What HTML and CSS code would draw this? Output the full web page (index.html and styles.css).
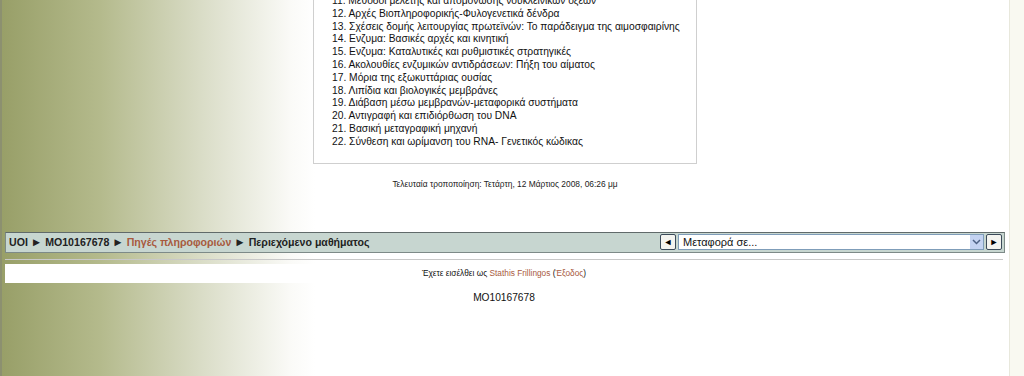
FILE: index.html
```html
<!DOCTYPE html>
<html lang="el">
<head>
  <meta charset="UTF-8">
  <title>MO10167678: Περιεχόμενο μαθήματος</title>
  <link rel="stylesheet" href="styles.css">
</head>
<body>
<div id="page">
  <div id="content">
    <div class="box">
      <ul class="topics">
        <li>11. Μέθοδοι μελέτης και απομόνωσης νουκλεϊνικών οξέων</li>
        <li>12. Αρχές Βιοπληροφορικής-Φυλογενετικά δένδρα</li>
        <li>13. Σχέσεις δομής λειτουργίας πρωτεϊνών: Το παράδειγμα της αιμοσφαιρίνης</li>
        <li>14. Ενζυμα: Βασικές αρχές και κινητική</li>
        <li>15. Ενζυμα: Καταλυτικές και ρυθμιστικές στρατηγικές</li>
        <li>16. Ακολουθίες ενζυμικών αντιδράσεων: Πήξη του αίματος</li>
        <li>17. Μόρια της εξωκυττάριας ουσίας</li>
        <li>18. Λιπίδια και βιολογικές μεμβράνες</li>
        <li>19. Διάβαση μέσω μεμβρανών-μεταφορικά συστήματα</li>
        <li>20. Αντιγραφή και επιδιόρθωση του DNA</li>
        <li>21. Βασική μεταγραφική μηχανή</li>
        <li>22. Σύνθεση και ωρίμανση του RNA- Γενετικός κώδικας</li>
      </ul>
    </div>
    <div class="modified">Τελευταία τροποποίηση: Τετάρτη, 12 Μάρτιος 2008, 06:26 μμ</div>
  </div>

  <div class="navbar">
    <div class="breadcrumb">
      <a href="#">UOI</a> <span class="sep">&#9658;</span>
      <a href="#">MO10167678</a> <span class="sep">&#9658;</span>
      <a href="#" class="link">Πηγές πληροφοριών</a> <span class="sep">&#9658;</span>
      Περιεχόμενο μαθήματος
    </div>
    <div class="jump">
      <span class="arrbtn">&#9668;</span>
      <div class="select">
        <span>Μεταφορά σε...</span>
        <i class="drop"><svg width="9" height="6" viewBox="0 0 9 6"><path d="M1 1 L4.5 4.5 L8 1" fill="none" stroke="#4d6185" stroke-width="1.5"/></svg></i>
      </div>
      <span class="arrbtn">&#9658;</span>
    </div>
  </div>

  <div class="footer">
    <div class="logininfo">Έχετε εισέλθει ως <a href="#">Stathis Frillingos</a> (<a href="#">Έξοδος</a>)</div>
    <div class="homelink">MO10167678</div>
  </div>
</div>
</body>
</html>
```

FILE: styles.css
```css
* {
  padding: 0;
  margin: 0;
  list-style: none;
}

html, body {
  height: 100%;
}

body {
  font-family: "Liberation Sans", Arial, sans-serif;
  color: #111;
  background:
    linear-gradient(to right, #8c9070 0, #8c9070 2px, transparent 2px),
    linear-gradient(to left, #f9f9f1 0, #f9f9f1 14px, #e8e8dc 14px, #e8e8dc 15px, transparent 15px),
    linear-gradient(to right, #989f68 2px, #b4ba8c 100px, #d9dcc6 200px, #fafaf7 290px, #fff 315px) no-repeat;
  background-color: #fff;
  overflow: hidden;
}

a {
  text-decoration: none;
  color: #111;
}

#page {
  width: 1000px;
  margin-left: 5px;
}

#content {
  margin-top: -5px;
}

.box {
  width: 364px;
  margin: 0 auto;
  border: 1px solid #cfcfcf;
  border-top: none;
  padding: 0 0 14px 18px;
  box-sizing: content-box;
}

.topics li {
  font-size: 10.25px;
  line-height: 12.8px;
  white-space: nowrap;
}

.modified {
  text-align: center;
  font-size: 8.4px;
  margin-top: 15px;
  color: #222;
}

.navbar {
  display: flex;
  justify-content: space-between;
  align-items: center;
  height: 19px;
  margin-top: 43px;
  border: 1px solid #7d8a88;
  border-top-color: #606a6a;
  background-color: #c7d6d0;
  padding: 0 0 0 3px;
}

.breadcrumb {
  font-size: 10.6px;
  font-weight: bold;
  white-space: nowrap;
  color: #222;
}

.breadcrumb a {
  color: #222;
}

.breadcrumb .sep {
  font-size: 11.5px;
  line-height: 10px;
}

.breadcrumb .link {
  color: #a85a3e;
}

.jump {
  display: flex;
  align-items: center;
  gap: 2px;
  padding-right: 2px;
}

.arrbtn {
  display: inline-block;
  width: 14px;
  height: 14px;
  border: 1px solid #3b4a5a;
  border-radius: 2px;
  background-color: #f4f4f0;
  font-size: 9px;
  line-height: 14px;
  text-align: center;
  color: #000;
}

.select {
  display: flex;
  align-items: center;
  justify-content: space-between;
  width: 306px;
  height: 16px;
  border: 1px solid #7f9db9;
  background-color: #fff;
  font-size: 11px;
  padding-left: 4px;
  box-sizing: border-box;
}

.select .drop {
  display: flex;
  align-items: center;
  justify-content: center;
  width: 13px;
  height: 14px;
  background-color: #c4d3f2;
}

.footer {
  border-top: 1px solid #c8c8c8;
  margin-top: 6px;
  width: 998px;
}

.logininfo {
  margin-top: 4px;
  height: 19px;
  line-height: 19px;
  background-color: #fff;
  text-align: center;
  font-size: 8.3px;
}

.logininfo a {
  color: #a85a3e;
}

.homelink {
  text-align: center;
  font-size: 10.2px;
  margin-top: 9px;
}
```
